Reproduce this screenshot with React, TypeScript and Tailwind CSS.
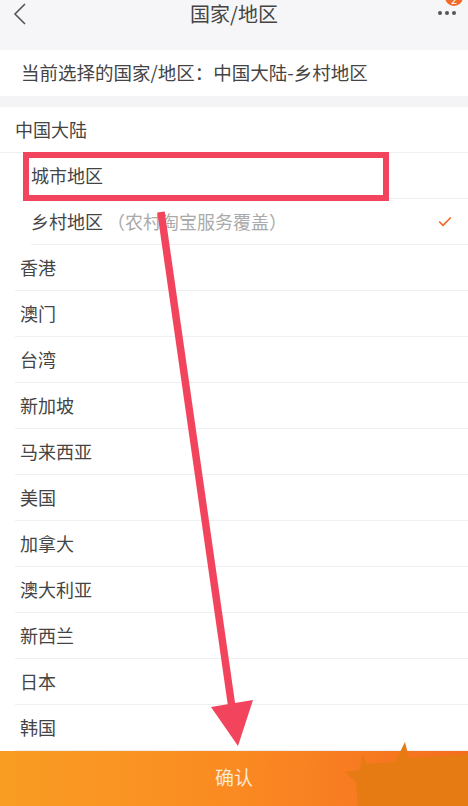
import { Check } from 'lucide-react';

const countries = ['香港', '澳门', '台湾', '新加坡', '马来西亚', '美国', '加拿大', '澳大利亚', '新西兰', '日本', '韩国'];

function Header() {
  return (
    <div className="relative flex h-[50px] items-start justify-center bg-[#f6f5f8]">
      <svg className="absolute left-[13px] top-[3px]" width="14" height="22" viewBox="0 0 14 22">
        <polyline points="12,1 2,11 12,21" fill="none" stroke="#555" strokeWidth="1.6" />
      </svg>
      <span className="text-[20px] leading-[28px] text-[#444]">国家/地区</span>
      <div className="absolute right-[12px] top-[11px] flex gap-[3px]">
        <span className="h-[4px] w-[4px] rounded-full bg-[#555]" />
        <span className="h-[4px] w-[4px] rounded-full bg-[#555]" />
        <span className="h-[4px] w-[4px] rounded-full bg-[#555]" />
      </div>
      <span className="absolute right-[5px] top-[-12px] flex h-[18px] w-[18px] items-end justify-center rounded-full bg-[#f26a2a] text-[11px] leading-[14px] text-white">
        2
      </span>
    </div>
  );
}

export default function App() {
  return (
    <div
      className="relative h-[806px] w-[468px] overflow-hidden bg-[#f4f3f6]"
      style={{ fontFamily: '"Noto Sans CJK SC", "Noto Sans", sans-serif' }}
    >
      <Header />
      <div className="flex h-[46px] items-center bg-white pl-[21px] text-[18.5px] text-[#444]">
        当前选择的国家/地区：中国大陆-乡村地区
      </div>
      <div className="mt-[11px] bg-white text-[18px] text-[#444]">
        <div className="flex h-[46px] items-center border-b border-[#efeff1] pl-[15px]">中国大陆</div>
        <div className="ml-[31px] flex h-[46px] items-center border-b border-[#efeff1]">城市地区</div>
        <div className="ml-[31px] flex h-[46px] items-center border-b border-[#efeff1]">
          <span>乡村地区</span>
          <span className="ml-[4px] text-[#aaa]">（农村淘宝服务覆盖）</span>
          <Check className="ml-auto mr-[15px] text-[#f06c2a]" size={16} strokeWidth={2.6} />
        </div>
        {countries.map((c) => (
          <div key={c} className="ml-[15px] flex h-[46px] items-center border-b border-[#efeff1] pl-[5px]">
            {c}
          </div>
        ))}
      </div>
      <div className="flex h-[55px] items-center justify-center bg-gradient-to-r from-[#f99d22] via-[#fa8a22] to-[#f56d1f] pb-[2px] text-[19px] text-[#fde8d2]">
        确认
      </div>

      {/* annotation overlay */}
      <svg className="pointer-events-none absolute left-0 top-0" width="468" height="806" viewBox="0 0 468 806">
        <rect x="26" y="155" width="360" height="43" fill="none" stroke="#f2455d" strokeWidth="6" />
        <line x1="161" y1="212" x2="232" y2="708" stroke="#f2455d" strokeWidth="7.5" />
        <polygon points="211,707 253,700 238,746" fill="#f2455d" />
        <polygon
          points="345,772 360,770 362,753 367,764 395,762 405,742 409,758 468,754 468,806 358,806 356,782"
          fill="#e57b12"
        />
      </svg>
    </div>
  );
}
